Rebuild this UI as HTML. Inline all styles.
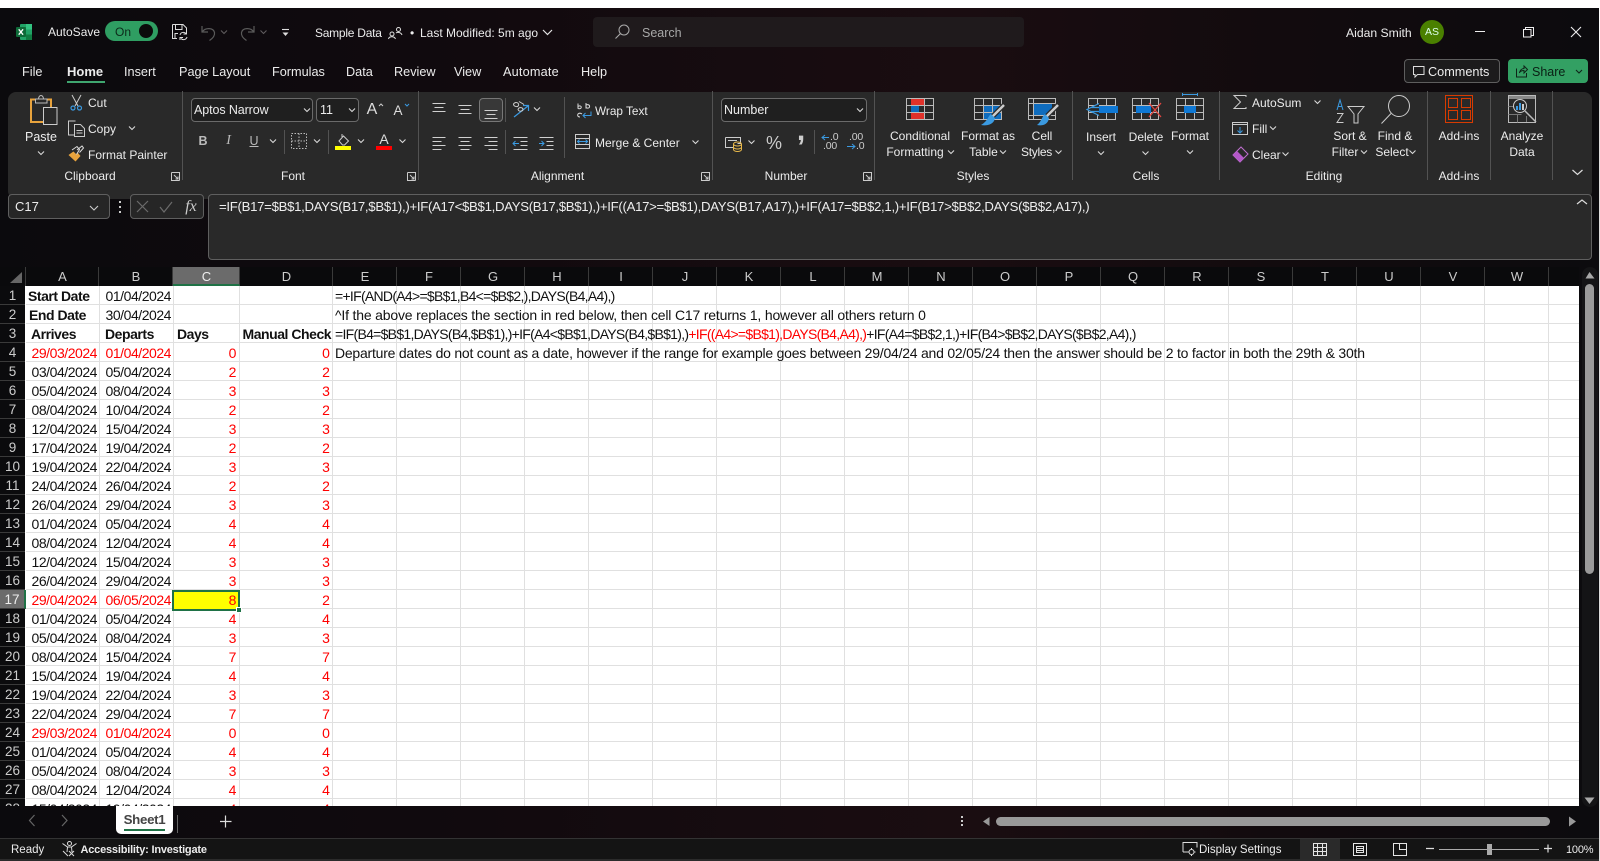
<!DOCTYPE html>
<html lang="en"><head><meta charset="utf-8"><title>Sample Data - Excel</title>
<style>
html,body{margin:0;padding:0;width:1600px;height:861px;overflow:hidden;background:#fff}
body{position:relative;font-family:"Liberation Sans",sans-serif;color:#ececec;font-size:12.5px}
.bg{position:absolute;left:0;top:8px;width:1599px;height:853px;background:linear-gradient(90deg,#0b0a0d 0,#110a0e 30%,#1a0d11 60%,#120b0e 80%,#0c0b0e 100%)}
.t,.c{position:absolute;white-space:nowrap;line-height:16px}
.t{transform:translateY(-50%)}
.c{transform:translate(-50%,-50%);text-align:center}
.box{position:absolute;box-sizing:border-box}
.ribbon{left:8px;top:92px;width:1584px;height:107px;background:#292929;border-radius:8px}
.sheet{position:absolute;left:0;top:286px;width:1579px;height:520px;overflow:hidden;background:#fff;color:#111;font-size:14px;letter-spacing:-.46px}
.sheet svg{position:absolute;left:0;top:0}
.r{position:relative;height:19px;line-height:21px;white-space:nowrap}
.r span{position:absolute;top:0}
.n{left:0;width:25px;height:19px;background:#0b0b0d;color:#ccc;text-align:center;font-size:13.5px;letter-spacing:0;border-bottom:1px solid #3a3a3a;box-sizing:border-box;line-height:20px}
.a{left:26px;width:71px;text-align:right}
.b{left:99px;width:72px;text-align:right}
.x{left:173px;width:63px;text-align:right;color:#f00}
.d{left:240px;width:89.5px;text-align:right;color:#f00}
.e{left:335px}
.red{color:#f00}
.bd{font-weight:bold}
.hd{position:absolute;top:267px;height:19px;line-height:19px;text-align:center;color:#ccc;font-size:13px;box-sizing:border-box;border-right:1px solid #3a3a3a;padding-left:1px}
.form{font-size:13.2px;letter-spacing:-.3px}
.tab{font-size:12.7px}
.dec{font-size:10.5px;color:#ccc;letter-spacing:-.2px}
</style></head>
<body>
<div class="bg"></div>

<!-- Title bar -->
<div class="t" style="left:48px;top:32px;font-size:12px">AutoSave</div>
<div class="box" style="left:105px;top:21px;width:53px;height:20px;border-radius:10px;background:#2f9e62"></div>
<div class="t" style="left:115px;top:32px;font-size:12px;color:#0c2a1a">On</div>
<div class="box" style="left:139px;top:24px;width:14px;height:14px;border-radius:50%;background:#0b0b0b"></div>
<div class="t" style="left:315px;top:33px;font-size:12px;letter-spacing:-.25px">Sample Data</div>
<div class="t" style="left:410px;top:33px;font-size:12px">•</div>
<div class="t" style="left:420px;top:33px;font-size:12px">Last Modified: 5m ago</div>
<div class="box" style="left:593px;top:17px;width:431px;height:30px;background:#1f1a1c;border-radius:4px"></div>
<div class="t" style="left:642px;top:32.5px;font-size:12.5px;color:#a8a8a8">Search</div>
<div class="t" style="left:1346px;top:33px;font-size:12.2px">Aidan Smith</div>
<div class="box" style="left:1420px;top:20px;width:24px;height:24px;border-radius:50%;background:#4a8000"></div>
<div class="c" style="left:1432px;top:32px;font-size:10.5px;color:#dfe">AS</div>

<!-- Tabs -->
<div class="t tab" style="left:22px;top:72px">File</div>
<div class="t" style="left:67px;top:72px;font-weight:bold;font-size:13px">Home</div>
<div class="box" style="left:67px;top:81px;width:38px;height:2px;background:#3fa66f"></div>
<div class="t tab" style="left:124px;top:72px">Insert</div>
<div class="t tab" style="left:179px;top:72px">Page Layout</div>
<div class="t tab" style="left:272px;top:72px">Formulas</div>
<div class="t tab" style="left:346px;top:72px">Data</div>
<div class="t tab" style="left:394px;top:72px">Review</div>
<div class="t tab" style="left:454px;top:72px">View</div>
<div class="t tab" style="left:503px;top:72px;letter-spacing:.2px">Automate</div>
<div class="t tab" style="left:581px;top:72px">Help</div>
<div class="box" style="left:1404px;top:59px;width:96px;height:24px;border:1px solid #5e5e5e;border-radius:4px;background:#1c1b1c"></div>
<div class="t" style="left:1428px;top:71.5px;font-size:12.7px">Comments</div>
<div class="box" style="left:1508px;top:59px;width:80px;height:24px;border-radius:4px;background:#33a063"></div>
<div class="t" style="left:1532px;top:71.5px;color:#0a1f14">Share</div>

<!-- Ribbon -->
<div class="box ribbon"></div>
<div class="c" style="left:41px;top:137px">Paste</div>
<div class="t" style="left:88px;top:103px;font-size:12px">Cut</div>
<div class="t" style="left:88px;top:129px;font-size:12px">Copy</div>
<div class="t" style="left:88px;top:155px;font-size:12px">Format Painter</div>
<div class="c" style="left:90px;top:176px;font-size:12px">Clipboard</div>

<div class="box" style="left:191px;top:98px;width:122px;height:24px;border:1px solid #6a6a6a;border-radius:4px;background:#1f1f1f"></div>
<div class="t" style="left:194px;top:110px;font-size:12.5px;letter-spacing:-.1px">Aptos Narrow</div>
<div class="box" style="left:316px;top:98px;width:43px;height:24px;border:1px solid #6a6a6a;border-radius:4px;background:#1f1f1f"></div>
<div class="t" style="left:320px;top:110px;font-size:12.5px">11</div>
<div class="c" style="left:372px;top:110px;font-size:16px;color:#ddd">A</div>
<div class="c" style="left:398px;top:111px;font-size:13.5px;color:#ddd">A</div>
<div class="c" style="left:203px;top:141px;font-weight:bold;color:#bbb">B</div>
<div class="c" style="left:228.6px;top:141px;font-family:'Liberation Serif',serif;font-style:italic;font-size:14px;color:#bbb">I</div>
<div class="c" style="left:254px;top:141px;color:#bbb;text-decoration:underline">U</div>
<div class="c" style="left:384px;top:139px;font-size:14px;color:#ddd">A</div>
<div class="c" style="left:293px;top:176px;font-size:12px">Font</div>

<div class="box" style="left:479px;top:98px;width:24px;height:24px;border:1px solid #777;border-radius:4px;background:#383838"></div>
<div class="t" style="left:595px;top:111px;font-size:11.8px">Wrap Text</div>
<div class="t" style="left:595px;top:143px;font-size:12px">Merge &amp; Center</div>
<div class="c" style="left:557.5px;top:176px;font-size:12px">Alignment</div>

<div class="box" style="left:721px;top:98px;width:146px;height:24px;border:1px solid #6a6a6a;border-radius:4px;background:#1f1f1f"></div>
<div class="t" style="left:724px;top:110px;font-size:12.5px">Number</div>
<div class="c" style="left:774px;top:143px;font-size:18px;color:#ccc">%</div>
<div class="c" style="left:801px;top:131px;font-size:30px;font-weight:bold;color:#ccc">,</div>
<div class="t dec" style="left:830px;top:137px">.0</div>
<div class="t dec" style="left:823px;top:146px">.00</div>
<div class="t dec" style="left:849px;top:137px">.00</div>
<div class="t dec" style="left:856px;top:146px">.0</div>
<div class="c" style="left:786px;top:176px;font-size:12px">Number</div>

<div class="c" style="left:920px;top:136px;font-size:12px">Conditional</div>
<div class="c" style="left:915px;top:152px;font-size:12px">Formatting</div>
<div class="c" style="left:988px;top:136px;font-size:12px">Format as</div>
<div class="c" style="left:983.5px;top:152px;font-size:12px">Table</div>
<div class="c" style="left:1042px;top:136px;font-size:12px">Cell</div>
<div class="c" style="left:1036.5px;top:152px;font-size:12px;letter-spacing:-.3px">Styles</div>
<div class="c" style="left:973px;top:176px;font-size:12px">Styles</div>

<div class="c" style="left:1101px;top:137px;font-size:12px">Insert</div>
<div class="c" style="left:1146px;top:137px;font-size:12px">Delete</div>
<div class="c" style="left:1190px;top:136px;font-size:12px">Format</div>
<div class="c" style="left:1146px;top:176px;font-size:12px">Cells</div>

<div class="t" style="left:1252px;top:103px;font-size:12px">AutoSum</div>
<div class="t" style="left:1252px;top:129px;font-size:12px">Fill</div>
<div class="t" style="left:1252px;top:155px;font-size:12px">Clear</div>
<div class="c" style="left:1350px;top:136px;font-size:12px">Sort &amp;</div>
<div class="c" style="left:1345px;top:152px;font-size:12px">Filter</div>
<div class="c" style="left:1395px;top:136px;font-size:12px">Find &amp;</div>
<div class="c" style="left:1392px;top:152px;font-size:12px">Select</div>
<div class="c" style="left:1324px;top:176px;font-size:12px">Editing</div>
<div class="c" style="left:1459px;top:136px;font-size:12px">Add-ins</div>
<div class="c" style="left:1459px;top:176px;font-size:12px">Add-ins</div>
<div class="c" style="left:1522px;top:136px;font-size:12px">Analyze</div>
<div class="c" style="left:1522px;top:152px;font-size:12px">Data</div>

<!-- Formula bar -->
<div class="box" style="left:8px;top:194px;width:102px;height:25px;background:#262626;border:1px solid #5f5f5f;border-radius:4px"></div>
<div class="t" style="left:15px;top:207px;font-size:13px">C17</div>
<div class="box" style="left:130px;top:194px;width:74px;height:25px;background:#262626;border:1px solid #5f5f5f;border-radius:4px"></div>
<div class="c" style="left:191px;top:207px;font-family:'Liberation Serif',serif;font-style:italic;font-size:16px;color:#ccc">fx</div>
<div class="box" style="left:208px;top:194px;width:1384px;height:66px;background:#292929;border:1px solid #5f5f5f;border-radius:4px"></div>
<div class="t form" style="left:219px;top:207px;color:#eee">=IF(B17=$B$1,DAYS(B17,$B$1),)+IF(A17&lt;$B$1,DAYS(B17,$B$1),)+IF((A17&gt;=$B$1),DAYS(B17,A17),)+IF(A17=$B$2,1,)+IF(B17&gt;$B$2,DAYS($B$2,A17),)</div>

<!-- Column headers -->
<div class="box" style="left:0;top:267px;width:1579px;height:19px;background:#0a0a0c"></div>
<div class="hd" style="left:0;width:26px"></div>
<div class="hd" style="left:26px;width:73px">A</div>
<div class="hd" style="left:99px;width:74px">B</div>
<div class="hd" style="left:173px;width:67px;background:#6b6b6b;color:#eee;border-bottom:2px solid #1f7246">C</div>
<div class="hd" style="left:240px;width:93px">D</div>
<div class="hd" style="left:333px;width:64px">E</div>
<div class="hd" style="left:397px;width:64px">F</div>
<div class="hd" style="left:461px;width:64px">G</div>
<div class="hd" style="left:525px;width:64px">H</div>
<div class="hd" style="left:589px;width:64px">I</div>
<div class="hd" style="left:653px;width:64px">J</div>
<div class="hd" style="left:717px;width:64px">K</div>
<div class="hd" style="left:781px;width:64px">L</div>
<div class="hd" style="left:845px;width:64px">M</div>
<div class="hd" style="left:909px;width:64px">N</div>
<div class="hd" style="left:973px;width:64px">O</div>
<div class="hd" style="left:1037px;width:64px">P</div>
<div class="hd" style="left:1101px;width:64px">Q</div>
<div class="hd" style="left:1165px;width:64px">R</div>
<div class="hd" style="left:1229px;width:64px">S</div>
<div class="hd" style="left:1293px;width:64px">T</div>
<div class="hd" style="left:1357px;width:64px">U</div>
<div class="hd" style="left:1421px;width:64px">V</div>
<div class="hd" style="left:1485px;width:64px">W</div>

<!-- Sheet -->
<div class="sheet">
<svg width="1579" height="520" shape-rendering="crispEdges"><path stroke="#e0e0e0" fill="none" d="M26 18.5H1579M26 37.5H1579M26 56.5H1579M26 75.5H1579M26 94.5H1579M26 113.5H1579M26 132.5H1579M26 151.5H1579M26 170.5H1579M26 189.5H1579M26 208.5H1579M26 227.5H1579M26 246.5H1579M26 265.5H1579M26 284.5H1579M26 303.5H1579M26 322.5H1579M26 341.5H1579M26 360.5H1579M26 379.5H1579M26 398.5H1579M26 417.5H1579M26 436.5H1579M26 455.5H1579M26 474.5H1579M26 493.5H1579M26 512.5H1579M99.5 0V520M173.5 0V520M239.5 0V520M332.5 0V520M396.5 0V520M460.5 0V520M524.5 0V520M588.5 0V520M652.5 0V520M716.5 0V520M780.5 0V520M844.5 0V520M908.5 0V520M972.5 0V520M1036.5 0V520M1100.5 0V520M1164.5 0V520M1228.5 0V520M1292.5 0V520M1356.5 0V520M1420.5 0V520M1484.5 0V520M1548.5 0V520"/></svg>
<div class="r"><span class="n">1</span><span class="bd" style="left:28px">Start Date</span><span class="b">01/04/2024</span><span class="e" style="letter-spacing:-.71px">=+IF(AND(A4&gt;=$B$1,B4&lt;=$B$2,),DAYS(B4,A4),)</span></div>
<div class="r"><span class="n">2</span><span class="bd" style="left:29px">End Date</span><span class="b">30/04/2024</span><span class="e" style="letter-spacing:-.18px">^If the above replaces the section in red below, then cell C17 returns 1, however all others return 0</span></div>
<div class="r"><span class="n">3</span><span class="bd" style="left:31px">Arrives</span><span class="bd" style="left:105px">Departs</span><span class="bd" style="left:177px">Days</span><span class="bd" style="left:242.5px">Manual Check</span><span class="e" style="letter-spacing:-.71px">=IF(B4=$B$1,DAYS(B4,$B$1),)+IF(A4&lt;$B$1,DAYS(B4,$B$1),)<span class="red" style="position:static">+IF((A4&gt;=$B$1),DAYS(B4,A4),)</span>+IF(A4=$B$2,1,)+IF(B4&gt;$B$2,DAYS($B$2,A4),)</span></div>
<div class="r"><span class="n">4</span><span class="a red">29/03/2024</span><span class="b red">01/04/2024</span><span class="x">0</span><span class="d">0</span><span class="e" style="letter-spacing:-.23px">Departure dates do not count as a date, however if the range for example goes between 29/04/24 and 02/05/24 then the answer should be 2 to factor in both the 29th &amp; 30th</span></div>
<div class="r"><span class="n">5</span><span class="a">03/04/2024</span><span class="b">05/04/2024</span><span class="x">2</span><span class="d">2</span></div>
<div class="r"><span class="n">6</span><span class="a">05/04/2024</span><span class="b">08/04/2024</span><span class="x">3</span><span class="d">3</span></div>
<div class="r"><span class="n">7</span><span class="a">08/04/2024</span><span class="b">10/04/2024</span><span class="x">2</span><span class="d">2</span></div>
<div class="r"><span class="n">8</span><span class="a">12/04/2024</span><span class="b">15/04/2024</span><span class="x">3</span><span class="d">3</span></div>
<div class="r"><span class="n">9</span><span class="a">17/04/2024</span><span class="b">19/04/2024</span><span class="x">2</span><span class="d">2</span></div>
<div class="r"><span class="n">10</span><span class="a">19/04/2024</span><span class="b">22/04/2024</span><span class="x">3</span><span class="d">3</span></div>
<div class="r"><span class="n">11</span><span class="a">24/04/2024</span><span class="b">26/04/2024</span><span class="x">2</span><span class="d">2</span></div>
<div class="r"><span class="n">12</span><span class="a">26/04/2024</span><span class="b">29/04/2024</span><span class="x">3</span><span class="d">3</span></div>
<div class="r"><span class="n">13</span><span class="a">01/04/2024</span><span class="b">05/04/2024</span><span class="x">4</span><span class="d">4</span></div>
<div class="r"><span class="n">14</span><span class="a">08/04/2024</span><span class="b">12/04/2024</span><span class="x">4</span><span class="d">4</span></div>
<div class="r"><span class="n">15</span><span class="a">12/04/2024</span><span class="b">15/04/2024</span><span class="x">3</span><span class="d">3</span></div>
<div class="r"><span class="n">16</span><span class="a">26/04/2024</span><span class="b">29/04/2024</span><span class="x">3</span><span class="d">3</span></div>
<div class="r"><span class="n" style="background:#6b6b6b;color:#eee;border-right:2px solid #1f7246;width:26px">17</span><span class="a red">29/04/2024</span><span class="b red">06/05/2024</span><span style="left:173px;width:67px;height:19px;background:#ff0;box-sizing:border-box;padding-right:4px;text-align:right;color:#f00">8</span><span class="d">2</span></div>
<div class="r"><span class="n">18</span><span class="a">01/04/2024</span><span class="b">05/04/2024</span><span class="x">4</span><span class="d">4</span></div>
<div class="r"><span class="n">19</span><span class="a">05/04/2024</span><span class="b">08/04/2024</span><span class="x">3</span><span class="d">3</span></div>
<div class="r"><span class="n">20</span><span class="a">08/04/2024</span><span class="b">15/04/2024</span><span class="x">7</span><span class="d">7</span></div>
<div class="r"><span class="n">21</span><span class="a">15/04/2024</span><span class="b">19/04/2024</span><span class="x">4</span><span class="d">4</span></div>
<div class="r"><span class="n">22</span><span class="a">19/04/2024</span><span class="b">22/04/2024</span><span class="x">3</span><span class="d">3</span></div>
<div class="r"><span class="n">23</span><span class="a">22/04/2024</span><span class="b">29/04/2024</span><span class="x">7</span><span class="d">7</span></div>
<div class="r"><span class="n">24</span><span class="a red">29/03/2024</span><span class="b red">01/04/2024</span><span class="x">0</span><span class="d">0</span></div>
<div class="r"><span class="n">25</span><span class="a">01/04/2024</span><span class="b">05/04/2024</span><span class="x">4</span><span class="d">4</span></div>
<div class="r"><span class="n">26</span><span class="a">05/04/2024</span><span class="b">08/04/2024</span><span class="x">3</span><span class="d">3</span></div>
<div class="r"><span class="n">27</span><span class="a">08/04/2024</span><span class="b">12/04/2024</span><span class="x">4</span><span class="d">4</span></div>
<div class="r"><span class="n">28</span><span class="a">15/04/2024</span><span class="b">19/04/2024</span><span class="x">4</span><span class="d">4</span></div>
<div class="box" style="left:172px;top:304px;width:68px;height:21px;border:2px solid #1f7246"></div>
<div class="box" style="left:236px;top:321px;width:6px;height:6px;background:#1f7246;border:1px solid #fff"></div>
</div>

<!-- Sheet tabs -->
<div class="box" style="left:116px;top:806px;width:57px;height:28px;background:#fff;border-radius:0 0 5px 5px"></div>
<div class="c" style="left:144.5px;top:820px;font-size:13.3px;font-weight:bold;color:#444;letter-spacing:-.3px">Sheet1</div>
<div class="box" style="left:124px;top:829px;width:41px;height:2px;background:#1f7246"></div>
<div class="box" style="left:996px;top:817px;width:554px;height:9px;border-radius:4.5px;background:#999"></div>

<!-- Status bar -->
<div class="box" style="left:0;top:838px;width:1599px;height:21px;background:#141414;border-top:1px solid #333"></div>
<div class="box" style="left:0;top:859px;width:1599px;height:2px;background:#2b2b2b"></div>
<div class="box" style="left:1300px;top:839px;width:40px;height:20px;background:#2a2a2a"></div>
<div class="t" style="left:11px;top:850px;font-size:11.5px">Ready</div>
<div class="t" style="left:80.5px;top:849.5px;font-size:11px;font-weight:bold;letter-spacing:-.2px">Accessibility: Investigate</div>
<div class="t" style="left:1199px;top:850px;font-size:11.5px">Display Settings</div>
<div class="t" style="left:1566px;top:849.5px;font-size:11px;letter-spacing:-.2px">100%</div>

<!-- Icons -->
<svg width="1600" height="861" style="position:absolute;left:0;top:0" fill="none">
<defs><path id="v" d="M-3 -1.5L0 1.5L3 -1.5" stroke="#d8d8d8" stroke-width="1.1"/></defs>
<!-- excel logo -->
<rect x="20" y="24" width="12" height="16" rx="1" fill="#21a366"/><rect x="26" y="24" width="6" height="5.5" fill="#33c481"/><rect x="26" y="34.5" width="6" height="5.5" fill="#107c41"/><rect x="16" y="27" width="10" height="10" rx="1" fill="#0e6b38"/><path d="M18.7 29.3l4.4 5.4M23.1 29.3l-4.4 5.4" stroke="#fff" stroke-width="1.3"/>
<!-- save -->
<path d="M172.5 24.5H183l3.5 3.5v4M172.5 24.5V38.5H177M175.5 25V29.5H182V25M175 38V33.5H178" stroke="#ddd"/><path d="M180 35a3.5 3.5 0 0 1 6-1.5M187 37a3.5 3.5 0 0 1-6 1.5M186.5 31v3h-3M180 40v-2.5h3" stroke="#ddd"/>
<!-- undo redo -->
<path d="M202 26v6h6M202.5 31.5c3-4 11-4 12 1c.5 3-2 6-5 8" stroke="#5a5a5a" stroke-width="1.2"/><use href="#v" x="224" y="32" opacity=".4"/>
<path d="M254 26v6h-6M253.5 31.5c-3-4-11-4-12 1c-.5 3 2 6 5 8" stroke="#5a5a5a" stroke-width="1.2"/><use href="#v" x="263.5" y="32" opacity=".4"/>
<path d="M282 29.500h7" stroke="#ddd" stroke-width="1.100"/><path d="M282.500 32.500h6l-3 3.500z" fill="#ddd"/>
<!-- coauth person -->
<circle cx="398.500" cy="29.500" r="2" stroke="#ddd"/><circle cx="392" cy="34" r="2" stroke="#ddd"/><path d="M388.500 39c.5-3 6-3 7 0M396 33c1-1 5-1 6 2" stroke="#ddd"/>
<path d="M543 30l4.500 4.500l4.500-4.500" stroke="#e4e4e4" stroke-width="1.2"/>
<!-- search -->
<circle cx="624" cy="30" r="5" stroke="#aaa"/><path d="M620.500 33.500l-5 5" stroke="#aaa" stroke-width="1.1"/>
<!-- window -->
<path d="M1475 31.500h10" stroke="#eee"/><path d="M1523.500 29.500h7.500v7.500h-7.500zM1525.500 29.500v-2h8v8h-2.500" stroke="#eee"/><path d="M1571 27l10 10M1581 27l-10 10" stroke="#eee" stroke-width="1.1"/>
<!-- comments & share -->
<path d="M1413.500 66.500h10.500v8h-6.500l-2.500 2.500v-2.500h-1.500z" stroke="#ddd"/>
<path d="M1516.500 68.500v8.500h10v-4M1519.500 73c.5-3 2.500-4.500 4.500-4.500v-2.500l3.500 3.500l-3.500 3.500v-2.500c-2 0-3.500.5-4.500 2z" stroke="#0f2418"/><path d="M1576 70l3 3l3-3" stroke="#0f2418" stroke-width="1.1"/>
<!-- ribbon separators -->
<path stroke="#525252" d="M182.500 91V180M418.500 91V180M564.500 97V158M712.500 91V180M874.500 91V180M1072.500 91V180M1219.500 91V180M1427.500 91V180M1490.500 91V180M1552.500 91V180M284.500 130V154M328.500 130V154M505.500 98V122M505.500 130V154M814.500 130V154"/>
<!-- launchers -->
<g stroke="#ccc"><path d="M171.500 172.500v8h8M171.500 172.500h8v8M174 175l4 4M178 176.500v2.500h-2.500"/><path d="M407.500 172.500v8h8M407.500 172.500h8v8M410 175l4 4M414 176.500v2.500h-2.500"/><path d="M701.500 172.500v8h8M701.500 172.500h8v8M704 175l4 4M708 176.500v2.500h-2.500"/><path d="M863.500 172.500v8h8M863.500 172.500h8v8M866 175l4 4M870 176.500v2.500h-2.500"/></g>
<!-- paste -->
<path d="M31 99.500h20v22.500h-20z" stroke="#e8a33d" stroke-width="2"/><rect x="35.500" y="99" width="11.500" height="4" fill="#292929" stroke="#bbb"/><path d="M38.500 99a2.500 3.500 0 0 1 5 0" stroke="#bbb"/><rect x="43.500" y="107.500" width="13.500" height="17" fill="#292929" stroke="#ccc"/><use href="#v" x="41" y="153"/>
<!-- scissors -->
<path d="M72 95l6 11M81 95l-6 11" stroke="#ccc"/><circle cx="73" cy="108" r="2" stroke="#3b9ae1" stroke-width="1.2"/><circle cx="79.500" cy="108" r="2" stroke="#3b9ae1" stroke-width="1.2"/>
<!-- copy -->
<path d="M74 135h-5.500v-14h7M74.500 124.500h6l4 4v8h-10zM76.500 130.500h6M76.500 133h6" stroke="#ccc"/><use href="#v" x="132" y="128"/>
<!-- painter -->
<path d="M68.500 155l7-5l5 6l-5 5.500z" fill="#e8a33d"/><path d="M72 150l5-3.500l2.500 3l-3 5M77 150l5-4l1.500 2l-4 4.500" stroke="#ddd" fill="#292929"/>
<!-- font chevrons etc -->
<use href="#v" x="307" y="110"/><use href="#v" x="352" y="110"/>
<path d="M379 106l2-2l2 2" stroke="#ccc"/><path d="M405 104l2 2l2-2" stroke="#3b9ae1"/>
<use href="#v" x="273" y="141"/><use href="#v" x="317" y="141"/><use href="#v" x="361" y="141"/><use href="#v" x="402.500" y="141"/>
<path d="M291.500 133.500h15v15h-15zM299 133.500v15M291.500 141h15" stroke="#bbb" stroke-dasharray="1.500 1.500"/>
<path d="M339 141l4.500-5l5 5l-4 4h-2zM342 134v3" stroke="#ccc"/><rect x="335" y="146" width="16" height="4" fill="#ff0"/><rect x="376" y="146" width="16" height="4" fill="#f00"/>
<!-- align -->
<g stroke="#d0d0d0"><path d="M432.500 103.500h13M434.500 107.500h9M432.500 111.500h13M458.500 105.500h13M460.500 109.500h9M458.500 113.500h13M484.500 110.500h13M486.500 114.500h9M484.500 118.500h13M432.500 137.500h13M432.500 141.500h9M432.500 145.500h13M432.500 149.500h9M458.500 137.500h13M460.500 141.500h9M458.500 145.500h13M460.500 149.500h9M484.500 137.500h13M488.500 141.500h9M484.500 145.500h13M488.500 149.500h9M513.500 137.500h14M520.500 141.500h7M520.500 145.500h7M513.500 149.500h14M539.500 137.500h14M546.500 141.500h7M546.500 145.500h7M539.500 149.500h14"/></g>
<path d="M513 143.500h6M515.500 141l-2.500 2.500l2.500 2.500M539 143.500h5M541.500 141l2.500 2.500l-2.500 2.500" stroke="#3b9ae1"/>
<path d="M514 117l14-11M523 105.500h5.500v5.500" stroke="#3b9ae1" stroke-width="1.200"/><path d="M513.500 104c2-3 6-1 5 1.500c-1 2-5 1-5-1.500zM518 109.500c1-3 5-2 5 0c-.5 2-4 2.500-5 0zM519 101.500l5 3" stroke="#ccc"/><use href="#v" x="537" y="109"/>
<!-- wrap text -->
<g transform="translate(0,8)"><path d="M578 95.500v5M578 98.500c2-1.500 4 0 3 1.500c-.5 1-3 1-3 0M586 95v5.500M586 97c2-1 4 0 3.500 2c-.5 1.500-3.500 1.500-3.500 0M582 106c-1.500-1-3-1-4 0c-1 1.500 0 3 2 3" stroke="#ddd"/><path d="M591 103.500v4h-8M585.500 105l-2.500 2.500l2.500 2.500" stroke="#3b9ae1"/></g>
<!-- merge -->
<path d="M575.500 134.500h14v14h-14zM575.500 138.500h14M575.500 144.500h14" stroke="#ccc"/><path d="M577 141.500h11M579.500 139.500l-2 2l2 2M585.500 139.500l2 2l-2 2" stroke="#3b9ae1"/><use href="#v" x="695.500" y="142"/>
<use href="#v" x="860" y="110"/>
<!-- number icons -->
<path d="M725.500 137.500h15v6h-3M725.500 137.500v10h8M728 140.500h9" stroke="#ccc"/><ellipse cx="737.500" cy="144" rx="4" ry="2" stroke="#e8b84a"/><path d="M733.500 144v5.500a4 2 0 0 0 8 0v-5.500M733.500 147a4 2 0 0 0 8 0" stroke="#e8b84a"/><use href="#v" x="751.500" y="142"/>
<path d="M822 137.500h7M825 135l-3 2.500l3 2.500M847 146.500h8M852 144l3 2.500l-3 2.500" stroke="#3b9ae1"/>
<!-- conditional -->
<g stroke="#bbb"><rect x="906.500" y="98.500" width="27" height="21"/><path d="M915.500 98.500v21M924.500 98.500v21M906.500 105.500h27M906.500 112.500h27"/></g>
<rect x="911" y="99" width="13" height="6" fill="#e0312a"/><rect x="911" y="113" width="13" height="6" fill="#e0312a"/><rect x="911" y="106" width="8" height="6" fill="#0f6cbd"/>
<!-- format as table -->
<rect x="984" y="106" width="17" height="14" fill="#0f6cbd"/>
<g stroke="#bbb"><rect x="974.500" y="98.500" width="27" height="21"/><path d="M983.500 98.500v21M992.500 98.500v21M974.500 105.500h27M974.500 112.500h27"/></g>
<path d="M1004 105l-12 12" stroke="#292929" stroke-width="5"/><path d="M1004 105l-12 12" stroke="#ccc" stroke-width="2.500"/><path d="M991 114c-3 2-3 7-10 11c5 1 13 0 14-7z" fill="#3b9ae1"/>
<!-- cell styles -->
<rect x="1033" y="103" width="19" height="12" fill="#0f6cbd"/>
<g stroke="#bbb"><rect x="1028.500" y="98.500" width="27" height="21"/><path d="M1028.500 103.500h27M1028.500 115.500h27M1033.500 98.500v21"/></g>
<path d="M1058 105l-12 12" stroke="#292929" stroke-width="5"/><path d="M1058 105l-12 12" stroke="#ccc" stroke-width="2.500"/><path d="M1045 114c-3 2-3 7-8 11c5 1 11 0 12-7z" fill="#3b9ae1"/>
<use href="#v" x="951" y="152"/><use href="#v" x="1003" y="152"/><use href="#v" x="1058.500" y="152"/>
<!-- insert -->
<g stroke="#bbb"><rect x="1088.500" y="98.500" width="27" height="21"/><path d="M1097.500 98.500v21M1106.500 98.500v21M1088.500 105.500h27M1088.500 112.500h27"/></g>
<rect x="1099" y="106" width="19" height="7" fill="#0f78d4"/><path d="M1099 103.500l-12 6l12 6M1091 107.500h8M1091 111.500h8" stroke="#3b9ae1" stroke-width="1.200" fill="#292929"/>
<!-- delete -->
<g stroke="#bbb"><rect x="1132.500" y="98.500" width="26" height="21"/><path d="M1141.500 98.500v21M1150.500 98.500v21M1132.500 105.500h26M1132.500 112.500h26"/></g>
<rect x="1136" y="106" width="15" height="7" fill="#0f78d4"/><path d="M1149 103l12 14M1161 103l-12 14" stroke="#e0443e" stroke-width="1.300"/>
<!-- format -->
<g stroke="#bbb"><rect x="1176.500" y="98.500" width="27" height="21"/><path d="M1185.500 98.500v21M1194.500 98.500v21M1176.500 105.500h27M1176.500 112.500h27"/></g>
<rect x="1184" y="106" width="12" height="7" fill="#0f78d4"/><path d="M1182 94.500h16M1182.500 93v3M1197.500 93v3" stroke="#3b9ae1"/>
<use href="#v" x="1101" y="153"/><use href="#v" x="1145.500" y="153"/><use href="#v" x="1190" y="152"/>
<!-- autosum, fill, clear -->
<path d="M1246 97v-1.500h-12l6.500 6.500l-6.500 6.500h12v-1.500" stroke="#ccc"/><use href="#v" x="1317.500" y="102"/>
<path d="M1232.500 122.500h15v12h-15z" stroke="#ccc"/><path d="M1232.500 124.500h15" stroke="#ccc"/><path d="M1240 127v6M1237.500 130.500l2.500 2.500l2.500-2.500" stroke="#3b9ae1"/><use href="#v" x="1273" y="128"/>
<path d="M1233 155l8-8l7 7l-8 8z" stroke="#c06fd0" fill="#292929"/><path d="M1233 155l4-4l7 7l-4 4z" fill="#b458c8"/><use href="#v" x="1285.500" y="154"/>
<!-- sort & filter -->
<path d="M1337 110l3-10l3 10M1338 106.500h4" stroke="#3b9ae1"/><path d="M1337 113.500h6l-6 9h6.500" stroke="#ccc"/><path d="M1348 106.500h16l-6 7.500v9h-4v-9z" stroke="#ccc"/>
<use href="#v" x="1364" y="152"/>
<!-- find -->
<circle cx="1399" cy="106" r="10.500" stroke="#ccc"/><path d="M1391 113.500l-9.500 10" stroke="#ccc"/><use href="#v" x="1412.500" y="152"/>
<!-- add-ins -->
<g stroke="#d83b01"><rect x="1445.500" y="95.500" width="27" height="27" stroke-width="1"/><rect x="1448.500" y="98.500" width="9" height="9"/><rect x="1461.500" y="98.500" width="9" height="9"/><rect x="1448.500" y="110.500" width="9" height="9"/><rect x="1461.500" y="110.500" width="9" height="9"/></g>
<!-- analyze -->
<rect x="1508" y="95" width="28" height="4" fill="#888"/><path d="M1508.500 95.500h27v27h-27z" stroke="#bbb"/><path d="M1508.500 106.500h7M1508.500 114.500h13M1517.500 114.500v8M1526.500 116v6" stroke="#777"/><circle cx="1520" cy="106" r="6.500" stroke="#ccc" fill="#292929"/><rect x="1516" y="106" width="2" height="4" fill="#3b9ae1"/><rect x="1519" y="103" width="2" height="7" fill="#3b9ae1"/><rect x="1522" y="104" width="2" height="6" fill="#ccc"/><path d="M1525 111l11 11" stroke="#bbb" stroke-width="1.500"/>
<path d="M1572.500 170l5 4.500l5-4.500" stroke="#ddd" stroke-width="1.200"/>
<!-- formula bar -->
<path d="M90 206l4 4l4-4" stroke="#ccc" stroke-width="1.100"/>
<g fill="#ccc"><rect x="119" y="201" width="2" height="2"/><rect x="119" y="206" width="2" height="2"/><rect x="119" y="211" width="2" height="2"/></g>
<path d="M137 201l11 11M148 201l-11 11" stroke="#6b6b6b" stroke-width="1.200"/><path d="M160 207l4 5l8-10" stroke="#6b6b6b" stroke-width="1.200"/>
<path d="M1577 204l5-4l5 4" stroke="#ddd" stroke-width="1.200"/>
<!-- corner -->
<path d="M22 272v11H10z" fill="#666"/>
<!-- v scrollbar -->
<rect x="1582" y="267" width="16" height="540" rx="8" fill="#141416"/>
<path d="M1589.500 272l5 6.500h-9z" fill="#a8a8a8"/><rect x="1585" y="284" width="9" height="290" rx="4.500" fill="#9a9a9a"/><path d="M1589.500 804l-5-6.500h10z" fill="#a8a8a8"/>
<!-- tabs nav -->
<path d="M34.500 815l-5 5.500l5 5.500" stroke="#666" stroke-width="1.200"/><path d="M62 815l5 5.500l-5 5.500" stroke="#666" stroke-width="1.200"/>
<path d="M177.500 815v18" stroke="#666"/><path d="M220 821.500h11.500M225.500 815.500v12" stroke="#ddd" stroke-width="1.200"/>
<g fill="#ccc"><rect x="961" y="816" width="2" height="2"/><rect x="961" y="820" width="2" height="2"/><rect x="961" y="824" width="2" height="2"/></g>
<path d="M983 821.500l6.500-4.500v9z" fill="#999"/><path d="M1576 821.500l-7-5v10z" fill="#999"/>
<!-- status bar icons -->
<circle cx="69.500" cy="843.500" r="2" stroke="#ddd"/><path d="M62.500 843.500l5 3.500h4l5-3.500M67.500 847l-.5 5M71.500 847l.5 5M63 851l5 5M69 851l5 5M74 851l-5 5" stroke="#ddd"/>
<path d="M1183 852v-9.500h14v5M1183 852h5" stroke="#ddd"/><circle cx="1191.500" cy="852" r="2.500" stroke="#ddd"/><path d="M1191.500 848v1M1191.500 855v1M1187.500 852h1M1194.500 852h1" stroke="#ddd"/>
<path d="M1313.500 843.500h13v12h-13zM1313.500 847.500h13M1313.500 851.500h13M1317.500 843.500v12M1322.500 843.500v12" stroke="#e4e4e4"/>
<path d="M1353.500 843.500h13v12h-13zM1356.500 846.500h7v6h-7zM1357 848.500h6M1357 850.500h6" stroke="#e4e4e4"/>
<path d="M1393.500 843.500h13v12h-13zM1399.500 843.500v6h7" stroke="#e4e4e4"/>
<path d="M1426 848.500h8M1544 848.500h8M1548 844.500v8" stroke="#ddd" stroke-width="1.200"/><path d="M1439 849.500h100" stroke="#aaa"/><rect x="1487" y="844" width="5" height="11" fill="#aaa"/>
<!-- edge -->
<path d="M1599.500 80V861" stroke="#ddd"/>
</svg>
</body></html>
